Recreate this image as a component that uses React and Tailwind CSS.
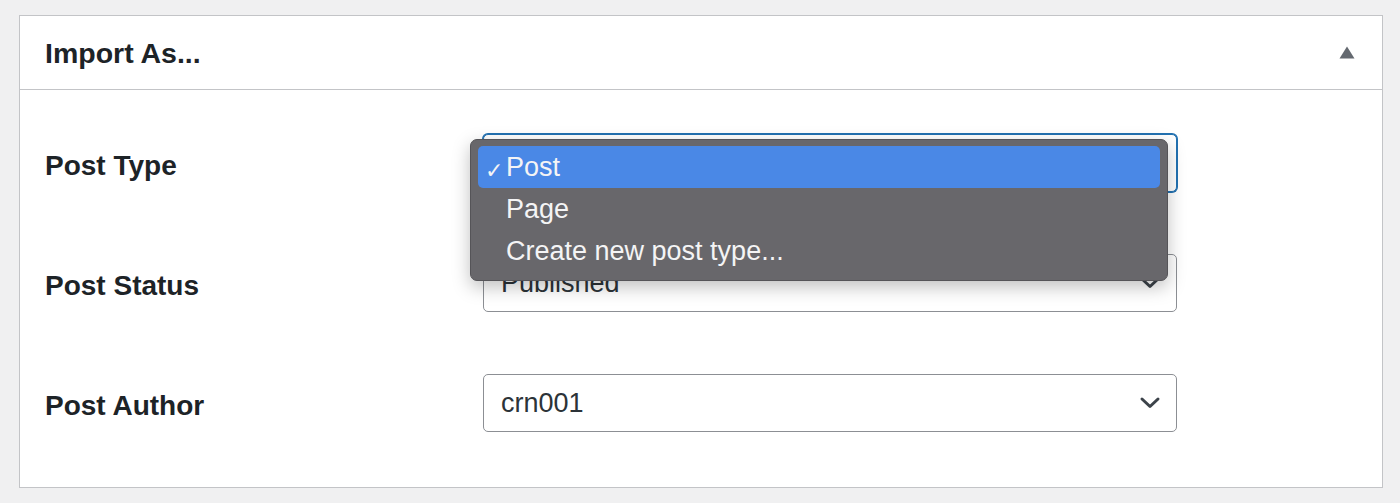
const font = { fontFamily: '"Liberation Sans", Arial, sans-serif' }

const Chevron = () => (
    <svg width="22" height="14" viewBox="0 0 22 14" className="absolute right-[15px] top-1/2 -translate-y-1/2">
        <path d="M3 3 L11 10.5 L19 3" fill="none" stroke="#3c434a" strokeWidth="3" strokeLinecap="round" strokeLinejoin="round" />
    </svg>
)

const Select = ({ value, focused, children }) => (
    <div
        className={
            'relative w-[694px] h-[58px] rounded-[5px] bg-white flex items-center pl-[17px] text-[27px] text-[#2c3338] ' +
            (focused ? 'border border-[#2271b1] shadow-[0_0_0_1px_#2271b1]' : 'border border-[#8c8f94]')
        }
    >
        {/* valeur cachée sous le menu ouvert */}
        <span className={focused ? 'invisible' : ''}>{value}</span>
        <Chevron />
        {children}
    </div>
)

const Row = ({ label, children }) => (
    <div className="flex items-center h-[58px]">
        <div className="w-[438px] pt-[6px] text-[28px] font-bold text-[#1d2327]">{label}</div>
        {children}
    </div>
)

const Menu = () => {
    const items = ['Post', 'Page', 'Create new post type...']
    return (
        <div className="absolute left-[-14px] top-[4px] w-[698px] rounded-[7px] bg-[#68676b] border border-[#555458] shadow-[0_6px_18px_rgba(0,0,0,0.25)] px-[7px] pt-[6px] pb-[8px] z-10">
            {items.map((item, i) => (
                <div
                    key={item}
                    className={'relative h-[42px] flex items-center pl-[28px] text-[27px] text-[#f4f4f5] rounded-[5px] ' + (i === 0 ? 'bg-[#4a88e6]' : '')}
                >
                    {i === 0 && <span className="absolute left-[7px] top-[8px] text-[22px]">✓</span>}
                    {item}
                </div>
            ))}
        </div>
    )
}

export default function App() {
    return (
        <div className="min-h-screen bg-[#f0f0f1] pl-[19px] pr-[17px] pt-[15px] pb-[15px]" style={font}>
            <div className="h-[473px] bg-white border border-[#c3c4c7]">
                {/* Header */}
                <div className="h-[74px] border-b border-[#c3c4c7] flex items-center justify-between pl-[25px] pr-[27px]">
                    <h2 className="text-[28.5px] font-bold text-[#1d2327] pt-[2px]">Import As...</h2>
                    <svg width="16" height="13" viewBox="0 0 16 13">
                        <path d="M8 0.5 L15.5 12.5 L0.5 12.5 Z" fill="#646970" />
                    </svg>
                </div>

                {/* Champs */}
                <div className="pl-[25px] pt-[44px] flex flex-col gap-[62px]">
                    <Row label="Post Type">
                        <Select value="Post" focused>
                            <Menu />
                        </Select>
                    </Row>
                    <Row label="Post Status">
                        <Select value="Published" />
                    </Row>
                    <Row label="Post Author">
                        <Select value="crn001" />
                    </Row>
                </div>
            </div>
        </div>
    )
}
